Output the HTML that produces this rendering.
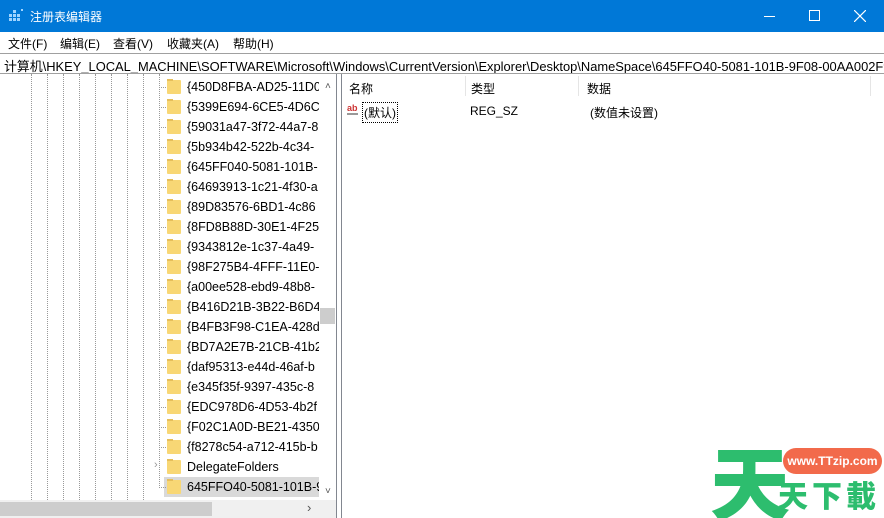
<!DOCTYPE html>
<html><head><meta charset="utf-8"><style>
*{margin:0;padding:0;box-sizing:border-box}
body{width:884px;height:518px;overflow:hidden;background:#fff;font-family:"Liberation Sans","Noto Sans CJK SC",sans-serif;font-size:12px;color:#000;position:relative}
.title{position:absolute;left:0;top:0;width:884px;height:32px;background:#0078d7;color:#fff}
.title .t{position:absolute;left:30px;top:8px;font-size:12px}
.menu{position:absolute;top:32px;left:0;width:884px;height:20px;background:#fff}
.menu span{position:absolute;top:3px;font-size:12px}
.addr{position:absolute;top:53px;left:0;width:884px;height:21px;border:1px solid #a0a0a0;border-left:none;border-right:none;white-space:nowrap;overflow:hidden;padding:2px 0 0 4px;font-size:12.9px}
.left{position:absolute;top:74px;left:0;width:337px;height:444px;border-right:1px solid #828790;overflow:hidden}
.right{position:absolute;top:74px;left:341px;width:543px;height:444px;border-left:1px solid #828790;overflow:hidden}
.vl{position:absolute;top:0;height:426px;width:1px;border-left:1px dotted #999}
.row{position:absolute;left:0;height:20px;width:320px}
.row .h{position:absolute;left:161px;top:10px;width:5px;border-top:1px dotted #999}
.row .f{position:absolute;left:167px;top:3px;width:14px;height:14px;background:#f8d775;border-radius:1px}
.row .f:before{content:"";position:absolute;left:0;top:-1px;width:6px;height:2px;background:#e6be5a}
.row .x{position:absolute;left:187px;top:3px;white-space:nowrap;font-size:12.5px}
</style></head><body>
<div class="title">
<svg style="position:absolute;left:9px;top:9px" width="16" height="14"><g fill="#9fd4ff"><rect x="0" y="5" width="3" height="3"/><rect x="4" y="5" width="3" height="3"/><rect x="8" y="5" width="3" height="3"/><rect x="0" y="9" width="3" height="3"/><rect x="4" y="9" width="3" height="3"/><rect x="8" y="9" width="3" height="3"/><rect x="4" y="1" width="3" height="3"/><rect x="12" y="0" width="2" height="2"/></g></svg>
<span class="t">注册表编辑器</span>
<div style="position:absolute;left:764px;top:16px;width:11px;height:1px;background:#fff"></div>
<div style="position:absolute;left:809px;top:10px;width:11px;height:11px;border:1px solid #fff"></div>
<svg style="position:absolute;left:854px;top:10px" width="12" height="12"><path d="M0 0L12 12M12 0L0 12" stroke="#fff" stroke-width="1.2"/></svg>
</div>
<div class="menu"><span style="left:8px">文件(F)</span><span style="left:60px">编辑(E)</span><span style="left:113px">查看(V)</span><span style="left:167px">收藏夹(A)</span><span style="left:233px">帮助(H)</span></div>
<div class="addr">计算机\HKEY_LOCAL_MACHINE\SOFTWARE\Microsoft\Windows\CurrentVersion\Explorer\Desktop\NameSpace\645FFO40-5081-101B-9F08-00AA002F954E</div>
<div class="left">
<div class="vl" style="left:31px"></div><div class="vl" style="left:47px"></div><div class="vl" style="left:63px"></div><div class="vl" style="left:79px"></div><div class="vl" style="left:95px"></div><div class="vl" style="left:111px"></div><div class="vl" style="left:127px"></div><div class="vl" style="left:143px"></div>
<div class="vl" style="left:159px;height:414px"></div>
<div class="row" style="top:3px"><i class="h"></i><i class="f"></i><span class="x">{450D8FBA-AD25-11D0</span></div>
<div class="row" style="top:23px"><i class="h"></i><i class="f"></i><span class="x">{5399E694-6CE5-4D6C</span></div>
<div class="row" style="top:43px"><i class="h"></i><i class="f"></i><span class="x">{59031a47-3f72-44a7-8</span></div>
<div class="row" style="top:63px"><i class="h"></i><i class="f"></i><span class="x">{5b934b42-522b-4c34-</span></div>
<div class="row" style="top:83px"><i class="h"></i><i class="f"></i><span class="x">{645FF040-5081-101B-</span></div>
<div class="row" style="top:103px"><i class="h"></i><i class="f"></i><span class="x">{64693913-1c21-4f30-a</span></div>
<div class="row" style="top:123px"><i class="h"></i><i class="f"></i><span class="x">{89D83576-6BD1-4c86</span></div>
<div class="row" style="top:143px"><i class="h"></i><i class="f"></i><span class="x">{8FD8B88D-30E1-4F25</span></div>
<div class="row" style="top:163px"><i class="h"></i><i class="f"></i><span class="x">{9343812e-1c37-4a49-</span></div>
<div class="row" style="top:183px"><i class="h"></i><i class="f"></i><span class="x">{98F275B4-4FFF-11E0-8</span></div>
<div class="row" style="top:203px"><i class="h"></i><i class="f"></i><span class="x">{a00ee528-ebd9-48b8-</span></div>
<div class="row" style="top:223px"><i class="h"></i><i class="f"></i><span class="x">{B416D21B-3B22-B6D4</span></div>
<div class="row" style="top:243px"><i class="h"></i><i class="f"></i><span class="x">{B4FB3F98-C1EA-428d-</span></div>
<div class="row" style="top:263px"><i class="h"></i><i class="f"></i><span class="x">{BD7A2E7B-21CB-41b2</span></div>
<div class="row" style="top:283px"><i class="h"></i><i class="f"></i><span class="x">{daf95313-e44d-46af-b</span></div>
<div class="row" style="top:303px"><i class="h"></i><i class="f"></i><span class="x">{e345f35f-9397-435c-8</span></div>
<div class="row" style="top:323px"><i class="h"></i><i class="f"></i><span class="x">{EDC978D6-4D53-4b2f</span></div>
<div class="row" style="top:343px"><i class="h"></i><i class="f"></i><span class="x">{F02C1A0D-BE21-4350</span></div>
<div class="row" style="top:363px"><i class="h"></i><i class="f"></i><span class="x">{f8278c54-a712-415b-b</span></div>
<div class="row" style="top:383px"><span style="position:absolute;left:154px;top:2px;color:#999;font-size:11px">›</span><i class="f"></i><span class="x">DelegateFolders</span></div>
<div class="row" style="top:403px;"><div style="position:absolute;left:164px;top:0;width:156px;height:20px;background:#d9d9d9"></div><i class="h"></i><i class="f"></i><span class="x">645FFO40-5081-101B-9</span></div>
<div style="position:absolute;left:319px;top:0;width:17px;height:426px;background:#fff"></div>
<div style="position:absolute;left:325px;top:7px;color:#555;font-size:10px">˄</div>
<div style="position:absolute;left:320px;top:234px;width:15px;height:16px;background:#cdcdcd"></div>
<div style="position:absolute;left:325px;top:412px;color:#555;font-size:10px">˅</div>
<div style="position:absolute;left:0;top:426px;width:336px;height:18px;background:#f0f0f0"></div>
<div style="position:absolute;left:0;top:428px;width:212px;height:14px;background:#cdcdcd"></div>
<div style="position:absolute;left:307px;top:426px;color:#555;font-size:13px">›</div>
</div>
<div class="right">
<div style="position:absolute;left:123px;top:2px;height:20px;border-left:1px solid #e5e5e5"></div>
<div style="position:absolute;left:236px;top:2px;height:20px;border-left:1px solid #e5e5e5"></div>
<div style="position:absolute;left:528px;top:2px;height:20px;border-left:1px solid #e5e5e5"></div>
<span style="position:absolute;left:7px;top:6px">名称</span>
<span style="position:absolute;left:129px;top:6px">类型</span>
<span style="position:absolute;left:245px;top:6px">数据</span>
<span style="position:absolute;left:5px;top:30px;font-size:9px;color:#c33;font-weight:bold;border-bottom:2px solid #999;line-height:9px">ab</span>
<span style="position:absolute;left:20px;top:28px;border:1px dotted #000;padding:1px 1px">(默认)</span>
<span style="position:absolute;left:128px;top:30px">REG_SZ</span>
<span style="position:absolute;left:248px;top:30px">(数值未设置)</span>
<div style="position:absolute;left:368px;top:366px;font-family:'Noto Sans CJK SC',sans-serif;font-size:80px;font-weight:900;color:#2dbd6e;line-height:80px">天</div>
<div style="position:absolute;left:441px;top:374px;width:99px;height:26px;background:#f26a4b;border-radius:13px;color:#fff;font-weight:bold;font-size:12px;text-align:center;line-height:26px">www.TTzip.com</div>
<div style="position:absolute;left:436px;top:403px;font-family:'Noto Sans CJK SC',sans-serif;font-size:30px;font-weight:900;color:#2dbd6e;line-height:34px;letter-spacing:4px">天下載</div>
</div>
</body></html>
